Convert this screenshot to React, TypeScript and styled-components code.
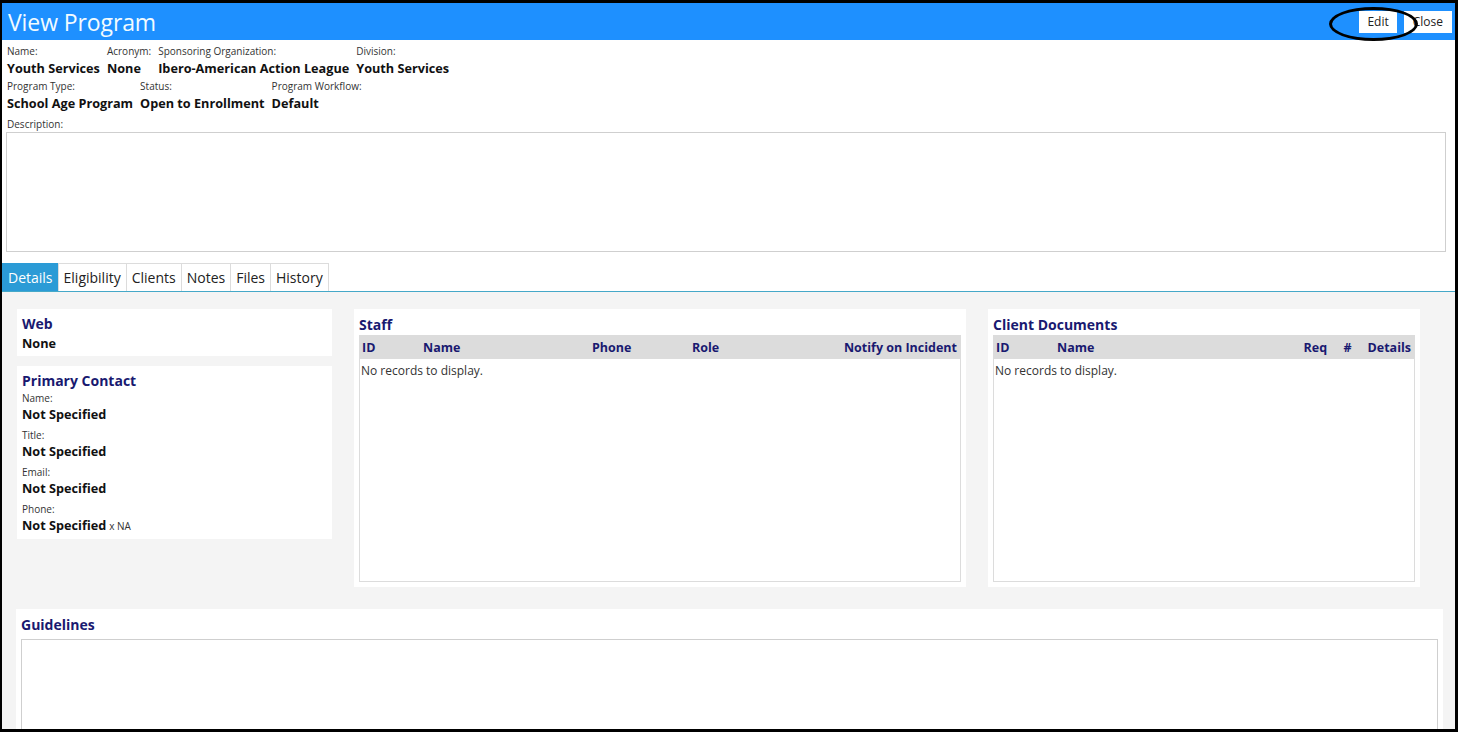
import styled, { createGlobalStyle } from "styled-components";

const GlobalStyle = createGlobalStyle`
  html, body {
    margin: 0;
    padding: 0;
    background: #ffffff;
  }
  body {
    font-family: "Open Sans", "Noto Sans", sans-serif;
    color: #111;
  }
  * { box-sizing: border-box; }
`;

const Frame = styled.div`
  width: 1458px;
  height: 732px;
  border-style: solid;
  border-color: #000;
  border-width: 3px 3px 3px 2px;
  overflow: hidden;
  display: flex;
  flex-direction: column;
  background: #fff;
  & > * { flex-shrink: 0; }
`;

const Header = styled.div`
  height: 37px;
  background: #1e90ff;
  display: flex;
  align-items: center;
  justify-content: space-between;
  padding: 0 0 0 6px;
  position: relative;
`;

const Title = styled.h1`
  margin: 0;
  font-size: 23px;
  font-weight: 400;
  color: #f2fbff;
  letter-spacing: -0.1px;
`;

const Actions = styled.div`
  display: flex;
  gap: 7px;
  padding-right: 3px;
  position: relative;
`;

const HeadButton = styled.button<{ $pad?: number }>`
  height: 22px;
  padding: 0 ${(p) => p.$pad ?? 8}px;
  border: none;
  background: #fff;
  font-family: inherit;
  font-size: 12px;
  color: #222;
  cursor: pointer;
`;

const Ellipse = styled.div`
  position: absolute;
  left: -30px;
  top: -4px;
  width: 89px;
  height: 34px;
  border: 3px solid #000;
  border-radius: 50%;
  pointer-events: none;
`;

const Info = styled.div`
  padding: 4px 5px 0 5px;
`;

const FieldRow = styled.div`
  display: flex;
  gap: 7px;
  margin-bottom: 1px;
`;

const Field = styled.div`
  display: flex;
  flex-direction: column;
`;

const Label = styled.span`
  font-size: 10px;
  line-height: 14px;
  color: #333;
`;

const Value = styled.span`
  display: block;
  font-size: 12.7px;
  line-height: 20px;
  font-weight: 700;
  color: #111;
`;

const CardValue = styled(Value)`
  line-height: 18px;
`;

const Small = styled.span`
  font-size: 10px;
  font-weight: 400;
  color: #333;
  margin-left: 3px;
`;

const DescLabel = styled(Label)`
  display: block;
  margin-top: 4px;
`;

const DescBox = styled.div`
  margin: 1px 4px 0 -1px;
  height: 120px;
  border: 1px solid #cfcfcf;
`;

const TabBar = styled.div`
  display: flex;
  margin-top: 11px;
  border-bottom: 1px solid #45a8c8;
`;

const Tab = styled.div<{ $active?: boolean }>`
  height: 28px;
  padding: 0 5px;
  display: flex;
  align-items: center;
  font-size: 14px;
  color: ${(p) => (p.$active ? "#fff" : "#222")};
  background: ${(p) => (p.$active ? "#2b9bd6" : "#fff")};
  border: 1px solid ${(p) => (p.$active ? "#2b9bd6" : "#dcdcdc")};
  border-bottom: none;
  margin-right: -1px;
`;

const Body = styled.div`
  flex: 1 1 auto !important;
  min-height: 0;
  background: #f4f4f4;
  padding: 17px 12px 0 14px;
`;

const Columns = styled.div`
  display: grid;
  grid-template-columns: 315px 612px 432px;
  column-gap: 22px;
  margin-left: 1px;
  align-items: start;
`;

const Stack = styled.div`
  display: flex;
  flex-direction: column;
  gap: 10px;
`;

const Card = styled.div<{ $bottom?: number }>`
  background: #fff;
  padding: 5px 5px ${(p) => p.$bottom ?? 4}px 5px;
`;

const CardTitle = styled.div`
  font-size: 14px;
  line-height: 20px;
  font-weight: 700;
  color: #191970;
`;

const ContactField = styled.div`
  display: flex;
  flex-direction: column;
  margin-bottom: 4px;
  &:first-of-type { margin-top: 1px; }
  &:last-child { margin-bottom: 0; }
  & > span:first-child {
    line-height: 14px;
  }
  & > span:last-child {
    line-height: 19px;
  }
`;

const TableCard = styled.div`
  background: #fff;
  height: 278px;
  padding: 6px 5px 5px 5px;
  display: flex;
  flex-direction: column;
`;

const TableHead = styled.div<{ $cols: string }>`
  display: grid;
  grid-template-columns: ${(p) => p.$cols};
  align-items: center;
  height: 24px;
  background: #dcdcdc;
  padding: 0 4px 0 3px;
  font-size: 12.5px;
  font-weight: 700;
  color: #191970;
`;

const TableBody = styled.div`
  flex: 1;
  border: 1px solid #dcdcdc;
  border-top: none;
  padding: 3px 1px;
  font-size: 12px;
  color: #333;
`;

const Guidelines = styled.div`
  background: #fff;
  margin-top: 22px;
  width: 1427px;
  padding: 6px 5px 0 5px;
  height: 140px;
`;

const GuideBox = styled.div`
  margin-top: 4px;
  height: 120px;
  border: 1px solid #cfcfcf;
`;

const contacts = ["Name:", "Title:", "Email:", "Phone:"];

export default function App() {
  return (
    <>
      <GlobalStyle />
      <Frame>
        <Header>
          <Title>View Program</Title>
          <Actions>
            <HeadButton>Edit</HeadButton>
            <HeadButton $pad={9}>Close</HeadButton>
            <Ellipse />
          </Actions>
        </Header>
        <Info>
          <FieldRow>
            <Field><Label>Name:</Label><Value>Youth Services</Value></Field>
            <Field><Label>Acronym:</Label><Value>None</Value></Field>
            <Field><Label>Sponsoring Organization:</Label><Value>Ibero-American Action League</Value></Field>
            <Field><Label>Division:</Label><Value>Youth Services</Value></Field>
          </FieldRow>
          <FieldRow>
            <Field><Label>Program Type:</Label><Value>School Age Program</Value></Field>
            <Field><Label>Status:</Label><Value>Open to Enrollment</Value></Field>
            <Field><Label>Program Workflow:</Label><Value>Default</Value></Field>
          </FieldRow>
          <DescLabel>Description:</DescLabel>
          <DescBox />
        </Info>
        <TabBar>
          <Tab $active>Details</Tab>
          <Tab>Eligibility</Tab>
          <Tab>Clients</Tab>
          <Tab>Notes</Tab>
          <Tab>Files</Tab>
          <Tab>History</Tab>
        </TabBar>
        <Body>
          <Columns>
            <Stack>
              <Card>
                <CardTitle>Web</CardTitle>
                <CardValue>None</CardValue>
              </Card>
              <Card $bottom={3}>
                <CardTitle>Primary Contact</CardTitle>
                {contacts.map((c) => (
                  <ContactField key={c}>
                    <Label>{c}</Label>
                    <Value>
                      Not Specified
                      {c === "Phone:" && <Small>x NA</Small>}
                    </Value>
                  </ContactField>
                ))}
              </Card>
            </Stack>
            <TableCard>
              <CardTitle>Staff</CardTitle>
              <TableHead $cols="61px 169px 100px 1fr auto">
                <span>ID</span>
                <span>Name</span>
                <span>Phone</span>
                <span>Role</span>
                <span>Notify on Incident</span>
              </TableHead>
              <TableBody>No records to display.</TableBody>
            </TableCard>
            <TableCard>
              <CardTitle>Client Documents</CardTitle>
              <TableHead $cols="61px 1fr 40px 24px auto">
                <span>ID</span>
                <span>Name</span>
                <span>Req</span>
                <span>#</span>
                <span>Details</span>
              </TableHead>
              <TableBody>No records to display.</TableBody>
            </TableCard>
          </Columns>
          <Guidelines>
            <CardTitle>Guidelines</CardTitle>
            <GuideBox />
          </Guidelines>
        </Body>
      </Frame>
    </>
  );
}
